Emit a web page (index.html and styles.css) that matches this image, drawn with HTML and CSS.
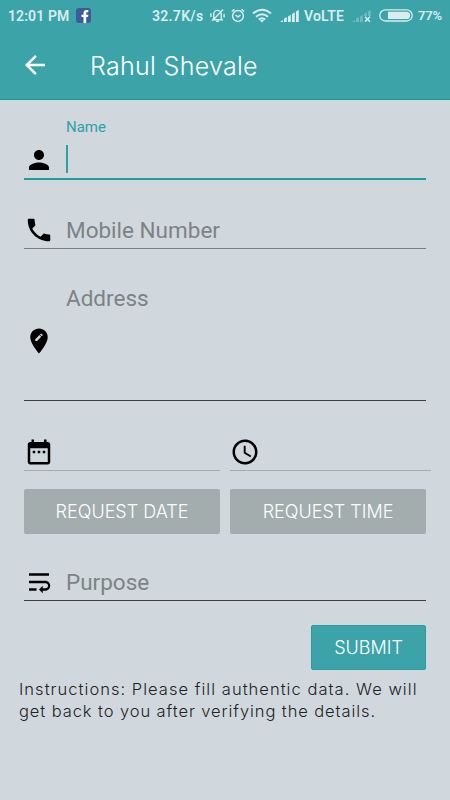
FILE: index.html
```html
<!DOCTYPE html>
<html lang="en">
<head>
    <meta charset="UTF-8">
    <meta name="viewport" content="width=device-width, initial-scale=1.0">
    <title>Rahul Shevale</title>
    <link rel="stylesheet" href="styles.css">
</head>
<body>
    <header class="header">
        <div class="status-bar">
            <span class="time">12:01 PM</span>
            <svg class="facebook" width="15" height="15" viewBox="0 0 15 15">
                <rect width="15" height="15" rx="3" fill="#3d5a9c"/>
                <path d="M7.500 15V9H5.500V6.700h2V5q0-3 3-3h1.800v2.200H11.200q-1 0-1 1v1.500h2.200L12 9h-1.800v6z" fill="#fff"/>
            </svg>
            <span class="speed">32.7K/s</span>
            <svg class="silent" width="15" height="15" viewBox="0 0 16 16" fill="none" stroke="#d8eded" stroke-width="1.500">
                <path d="M4 11V6.500a4 4 0 0 1 8 0V11l1 1.500H3zM6.500 14.300h3M14 1.500L2.500 13.500M1 5.500v4M15 6v4"/>
            </svg>
            <svg class="alarm" width="14" height="15" viewBox="0 0 14 15" fill="none" stroke="#d8eded" stroke-width="1.500">
                <circle cx="7" cy="8" r="5.400"/>
                <path d="M4.500 7L7 9l2.500-2M.8 3.500L3.500 1.300M13.200 3.500L10.500 1.300"/>
            </svg>
            <svg class="wifi" width="20" height="15" viewBox="0 0 20 15" fill="none" stroke="#d8eded" stroke-width="2">
                <path d="M1 5.500q9-7.500 18 0M4 8.800q6-5 12 0M6.800 11.500q3.200-2.600 6.400 0"/>
                <path d="M7.800 12.300L10 14.500l2.200-2.200q-2.200-1.300-4.400 0z" fill="#d8eded" stroke="none"/>
            </svg>
            <svg class="signal" width="19" height="13" viewBox="0 0 19 13" fill="#d8eded">
                <path d="M0 13l3-2v2zM4 9.800l2.800-1.700V13H4zM8 7.500l2.800-1.800V13H8zM12 5l2.800-1.800V13H12zM16 2.500L18.800.700V13H16z"/>
            </svg>
            <span class="volte">VoLTE</span>
            <svg class="no-signal" width="19" height="13" viewBox="0 0 19 13" fill="#6dbbbe">
                <path d="M0 13l3-2v2zM4 9.800l2.800-1.700V13H4zM8 7.500l2.800-1.800V13H8zM12 5l2.800-1.800V7H12zM16 2.500L18.800.700V7H16z"/>
                <path d="M13 7.700l5 5M18 7.700l-5 5" stroke="#d8eded" stroke-width="1.500"/>
            </svg>
            <svg class="battery" width="34" height="13" viewBox="0 0 34 13">
                <rect x=".8" y=".8" width="32.400" height="11.200" rx="5.600" fill="none" stroke="#d8eded" stroke-width="1.300"/>
                <path d="M9 2.800h18.500a3.600 3.600 0 0 1 0 7.200H9z" fill="#d8eded"/>
            </svg>
            <span class="percent">77%</span>
        </div>
        <div class="toolbar">
            <svg class="back" width="30" height="30" viewBox="0 0 24 24" fill="#fff">
                <path d="M20 11H7.830l5.590-5.590L12 4l-8 8 8 8 1.410-1.410L7.830 13H20v-2z"/>
            </svg>
            <h1 class="title">Rahul Shevale</h1>
        </div>
    </header>

    <main class="form">
        <div class="field name-field">
            <svg class="icon" viewBox="0 0 24 24"><path d="M12 12c2.210 0 4-1.790 4-4s-1.790-4-4-4-4 1.790-4 4 1.790 4 4 4zm0 2c-2.670 0-8 1.340-8 4v2h16v-2c0-2.660-5.330-4-8-4z"/></svg>
            <div class="input-area">
                <label class="label">Name</label>
                <div class="cursor"></div>
            </div>
        </div>
        <div class="field mobile-field">
            <svg class="icon" viewBox="0 0 24 24"><path d="M6.620 10.790c1.440 2.830 3.760 5.140 6.590 6.590l2.200-2.200c.27-.27.67-.36 1.020-.24 1.120.37 2.330.57 3.570.57.55 0 1 .45 1 1V20c0 .55-.45 1-1 1-9.390 0-17-7.610-17-17 0-.55.45-1 1-1h3.500c.55 0 1 .45 1 1 0 1.250.2 2.450.57 3.570.11.35.03.74-.25 1.020l-2.200 2.200z"/></svg>
            <span class="hint">Mobile Number</span>
        </div>
        <div class="field address-field">
            <svg class="icon" viewBox="0 0 24 24">
                <path d="M12 2C8.140 2 5 5.140 5 9c0 5.250 7 13 7 13s7-7.750 7-13c0-3.860-3.140-7-7-7zm-1.560 10H9v-1.440l3.350-3.340 1.430 1.430L10.440 12zm4.450-4.450l-.7.700-1.440-1.440.7-.7c.15-.15.390-.15.540 0l.9.900c.15.150.15.390 0 .540z"/>
            </svg>
            <span class="hint">Address</span>
        </div>

        <div class="request">
            <div class="picker">
                <div class="picked">
                    <svg class="icon" viewBox="0 0 24 24"><path d="M9 11H7v2h2v-2zm4 0h-2v2h2v-2zm4 0h-2v2h2v-2zm2-7h-1V2h-2v2H8V2H6v2H5c-1.110 0-1.990.9-1.990 2L3 20c0 1.100.89 2 2 2h14c1.100 0 2-.9 2-2V6c0-1.100-.9-2-2-2zm0 16H5V9h14v11z"/></svg>
                </div>
                <button class="button grey date" type="button">REQUEST DATE</button>
            </div>
            <div class="picker">
                <div class="picked wide">
                    <svg class="icon" viewBox="0 0 24 24"><path d="M11.990 2C6.470 2 2 6.480 2 12s4.470 10 9.990 10C17.520 22 22 17.520 22 12S17.520 2 11.990 2zM12 20c-4.420 0-8-3.580-8-8s3.580-8 8-8 8 3.580 8 8-3.580 8-8 8zm.5-13H11v6l5.250 3.150.75-1.230-4.500-2.670z"/></svg>
                </div>
                <button class="button grey clock" type="button">REQUEST TIME</button>
            </div>
        </div>

        <div class="field purpose-field">
            <svg class="icon" viewBox="0 0 24 24"><path d="M4 19h6v-2H4v2zM20 5H4v2h16V5zm-3 6H4v2h13.250c1.100 0 2 .9 2 2s-.9 2-2 2H15v-2l-3 3 3 3v-2h2c2.210 0 4-1.790 4-4s-1.790-4-4-4z"/></svg>
            <span class="hint">Purpose</span>
        </div>
        <button class="button submit" type="button">SUBMIT</button>
    </main>

    <p class="instructions"><span class="line first">Instructions: Please fill authentic data. We will</span> <span class="line second">get back to you after verifying the details.</span></p>
</body>
</html>
```
FILE: styles.css
```css
* {
    box-sizing: border-box;
}
body {
    margin: 0;
    height: 800px;
    overflow: hidden;
    background-color: #d0d8de;
    font-family: Roboto, sans-serif;
}
svg {
    display: block;
    flex-shrink: 0;
}
.header {
    height: 100px;
    background: #3ca4a9;
    border-bottom: 1px solid #1b999e;
}
.status-bar {
    display: flex;
    align-items: center;
    height: 31px;
    padding-left: 8px;
    color: #d8eded;
    font-size: 14px;
    font-weight: 600;
    white-space: nowrap;
}
.status-bar span {
    flex-shrink: 0;
}
.time {
    width: 68px;
    letter-spacing: 0.1px;
}
.speed {
    width: 52px;
    margin-left: 61px;
    letter-spacing: 0.3px;
}
.silent {
    margin-left: 6px;
}
.alarm {
    margin-left: 6px;
}
.wifi {
    margin-left: 7px;
}
.signal {
    margin-left: 8px;
}
.volte {
    width: 42px;
    margin-left: 5px;
    letter-spacing: 0.2px;
}
.no-signal {
    margin-left: 6px;
}
.battery {
    margin-left: 8px;
}
.percent {
    margin-left: 5px;
    font-size: 13px;
    letter-spacing: -0.2px;
}
.toolbar {
    display: flex;
    align-items: center;
    height: 68px;
    padding-left: 20px;
}
.title {
    margin: 0 0 0 40px;
    color: white;
    font-family: Inter, sans-serif;
    font-size: 25px;
    font-weight: 300;
    line-height: 30px;
    padding-top: 1px;
    letter-spacing: 0.3px;
}
.form {
    display: flex;
    flex-direction: column;
    padding: 0 24px;
}
.field {
    display: flex;
    align-items: center;
    border-bottom: 1px solid #3b3f42;
}
.icon {
    width: 30px;
    height: 30px;
    fill: black;
}
.hint {
    margin-left: 12px;
    color: #7d8385;
    font-size: 22.5px;
    line-height: 30px;
}
.name-field {
    height: 80px;
    align-items: flex-end;
    border-bottom: 2px solid #1b9da1;
}
.name-field .icon {
    margin-bottom: 3px;
}
.input-area {
    margin-left: 12px;
}
.label {
    display: block;
    color: #2fa0a4;
    font-size: 15px;
    line-height: 18px;
}
.cursor {
    width: 2px;
    height: 28px;
    margin: 9px 0 5px;
    background: #2fa0a4;
}
.mobile-field {
    height: 69px;
    padding-top: 31px;
    border-color: #7c8285;
}
.address-field {
    height: 152px;
    padding-top: 33px;
}
.address-field .hint {
    align-self: flex-start;
    padding-top: 1px;
}
.request {
    display: flex;
    gap: 10px;
}
.picker {
    width: 196px;
}
.picked {
    display: flex;
    align-items: flex-end;
    height: 70px;
    padding-bottom: 3px;
    border-bottom: 1px solid #a6adaf;
}
.wide {
    width: 201px;
}
.button {
    display: block;
    height: 45px;
    padding: 0;
    border: none;
    border-radius: 2px;
    color: white;
    font-family: Inter, sans-serif;
    font-size: 18px;
    font-weight: 300;
    white-space: nowrap;
}
.grey {
    width: 196px;
    margin-top: 18px;
    background: #a3adad;
}
.purpose-field {
    height: 67px;
    padding-top: 30px;
}
.submit {
    align-self: flex-end;
    width: 115px;
    margin-top: 24px;
    background: #3ca4a9;
    border: 1px solid #2a9ca1;
}
.instructions {
    margin: 8px 0 0 19px;
    color: #222;
    font-family: Inter, sans-serif;
    font-size: 16.5px;
    font-weight: 300;
    line-height: 22px;
}
.line {
    display: block;
    white-space: nowrap;
}
.first {
    letter-spacing: 1.03px;
}
.second {
    letter-spacing: 0.91px;
}
```
